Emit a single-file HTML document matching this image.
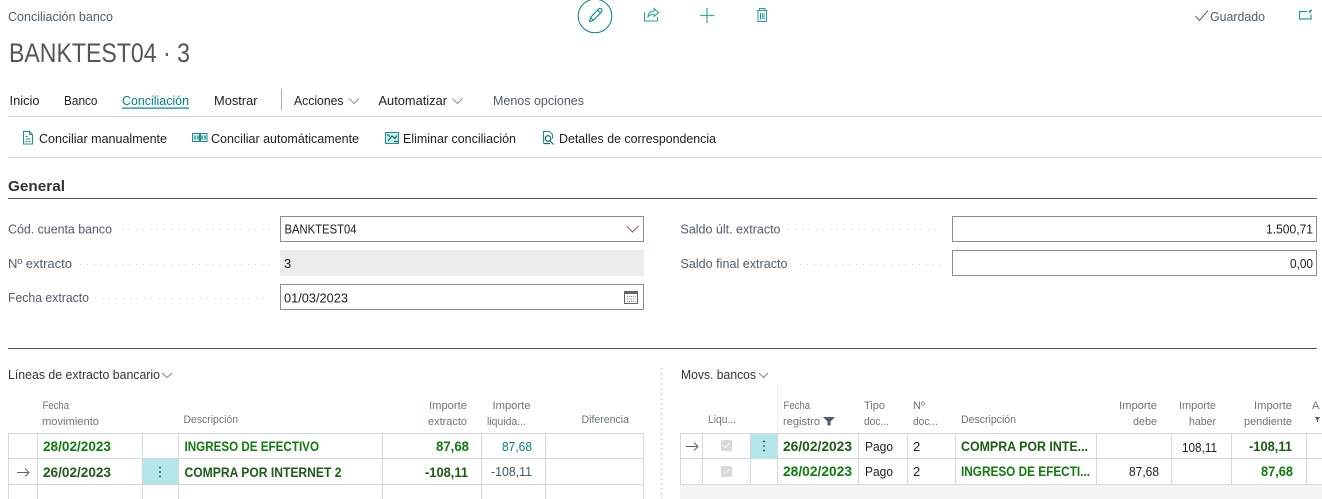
<!DOCTYPE html>
<html lang="es">
<head>
<meta charset="utf-8">
<title>Conciliación banco</title>
<style>
html,body{margin:0;padding:0;background:#fff;width:1322px;height:499px;overflow:hidden}
svg{display:block}
text{font-family:"Liberation Sans",sans-serif;font-size:13px;fill:#212121;white-space:pre}
.g{fill:#505c6d}
.h{font-size:11px;fill:#6b7480}
.l{font-size:13px;fill:#505c6d}
.b{font-weight:bold;font-size:13.5px;fill:#107c10}
.d{font-weight:bold;font-size:13.5px;fill:#1c5c14}
.ln{stroke:#d5d8dc;stroke-width:1;fill:none}
.tl{stroke:#00848a;stroke-width:1;fill:none}
.dots{stroke:#d0d3d6;stroke-width:1;stroke-dasharray:1 6;fill:none}
.arrow{stroke:#5c6670;stroke-width:1;fill:none}
</style>
</head>
<body>
<svg width="1322" height="499" viewBox="0 0 1322 499" xmlns="http://www.w3.org/2000/svg">
<rect width="1322" height="499" fill="#fff"/>

<!-- Header -->
<text x="8" y="21" class="g" textLength="105" lengthAdjust="spacingAndGlyphs">Conciliación banco</text>
<text x="9" y="62" style="font-size:27px;fill:#555" textLength="181" lengthAdjust="spacingAndGlyphs">BANKTEST04 · 3</text>

<!-- Top icons -->
<circle cx="595" cy="16" r="16.8" class="tl"/>
<path d="M589.500 21.500l1-4 8-8.500a1.700 1.700 0 0 1 3 3l-8.300 8.500zM590.500 17.500l3 3M597.500 10l3 3" fill="none" stroke="#00848a" stroke-width="1"/>
<path d="M644.500 12v9h13v-4M648 17c0-4 3-6 6-6V8.500l4.500 4-4.500 4V14c-2.500 0-4.500 1-6 3z" fill="none" stroke="#2a9a9e" stroke-width="1"/>
<path d="M707 8v15M700 15.500h14.500" fill="none" stroke="#3fa5a8" stroke-width="1.200"/>
<path d="M757 10.500h10.500M759.500 10.500V8.500h5.500v2M758 10.500v11h8.500v-11M760.500 13v6.500M762.250 13v6.500M764 13v6.500" fill="none" stroke="#2a9a9e" stroke-width="1"/>

<path d="M1195.500 16l4 4.500 8.500-10" fill="none" stroke="#5c6670" stroke-width="1"/>
<text x="1210" y="21" class="g" textLength="55" lengthAdjust="spacingAndGlyphs">Guardado</text>
<path d="M1307 11.500h-7.500v7.500h11.500v-4.500" fill="none" stroke="#2a9a9e" stroke-width="1.200"/>
<path d="M1309 12.500l2.500-2.500" stroke="#00848a" stroke-width="1.500" fill="none"/>

<!-- Nav -->
<text x="9.500" y="105" textLength="30" lengthAdjust="spacingAndGlyphs">Inicio</text>
<text x="64" y="105" textLength="33.500" lengthAdjust="spacingAndGlyphs">Banco</text>
<text x="122" y="105" style="fill:#00848a" textLength="67" lengthAdjust="spacingAndGlyphs">Conciliación</text>
<rect x="122" y="107.500" width="67" height="1.200" fill="#00848a"/>
<text x="214" y="105" textLength="43.500" lengthAdjust="spacingAndGlyphs">Mostrar</text>
<rect x="281" y="89" width="1" height="21" fill="#a9aeb4"/>
<text x="294" y="105" textLength="49.500" lengthAdjust="spacingAndGlyphs">Acciones</text>
<path d="M349 98.500l5 5 5-5" fill="none" stroke="#8a929b" stroke-width="1"/>
<text x="378.500" y="105" textLength="68.500" lengthAdjust="spacingAndGlyphs">Automatizar</text>
<path d="M452.500 98.500l5 5 5-5" fill="none" stroke="#8a929b" stroke-width="1"/>
<text x="493" y="105" class="g" textLength="91" lengthAdjust="spacingAndGlyphs">Menos opciones</text>
<path d="M8 116.500H1322" stroke="#d5d8dc" fill="none"/>

<!-- Action bar -->
<path d="M23.500 131.500h6l3 3v9.500h-9zM29.500 131.500v3h3" fill="none" stroke="#1d8f94" stroke-width="1"/>
<path d="M25.500 136.500h2M25.500 139h5M25.500 141.500h2M28.500 141.500h2" stroke="#1d8f94" stroke-width="1" fill="none"/>
<text x="39" y="143" textLength="128" lengthAdjust="spacingAndGlyphs">Conciliar manualmente</text>

<path d="M192.500 133.500h8v8h-8zM199.500 133.500h7.500v8h-7.500z" fill="#d5eeee" stroke="#1d8f94" stroke-width="1"/>
<path d="M195 135.500v4M198 135.500v4M202 135.500v4M205 135.500v4" stroke="#0c5f63" stroke-width="1" fill="none"/>
<text x="211" y="143" textLength="148" lengthAdjust="spacingAndGlyphs">Conciliar automáticamente</text>

<path d="M385.500 132.500h13v11h-13z" fill="#cfeaea" stroke="#1d8f94" stroke-width="1"/>
<path d="M388 141l4-5 3 2.500 2-3M387 134.500l3 2M394 141.500h4" stroke="#0e6f73" stroke-width="1.200" fill="none"/>
<text x="403" y="143" textLength="113" lengthAdjust="spacingAndGlyphs">Eliminar conciliación</text>

<path d="M543.500 143.500v-12h6l3 3v4" fill="none" stroke="#1d8f94" stroke-width="1"/>
<circle cx="548" cy="138.500" r="2.800" fill="none" stroke="#0e6f73" stroke-width="1.200"/>
<path d="M550 141l3.500 3.500M544 143.500h6" stroke="#0e6f73" stroke-width="1.200" fill="none"/>
<text x="559" y="143" textLength="157" lengthAdjust="spacingAndGlyphs">Detalles de correspondencia</text>
<path d="M8 157.500H1322" stroke="#d5d8dc" fill="none"/>

<!-- General -->
<text x="8" y="191" style="font-weight:bold;font-size:15px;fill:#333" textLength="57" lengthAdjust="spacingAndGlyphs">General</text>
<path d="M8 198.500H1317" stroke="#505c6d" fill="none"/>

<text x="8" y="233.500" class="l" textLength="104" lengthAdjust="spacingAndGlyphs">Cód. cuenta banco</text>
<path d="M122 229.500H270" class="dots"/>
<rect x="280.500" y="216.500" width="363" height="25" fill="#fff" stroke="#868e96"/>
<text x="284.500" y="233.500" textLength="72" lengthAdjust="spacingAndGlyphs">BANKTEST04</text>
<path d="M626.500 226l6 6 6-6" fill="none" stroke="#8a6a50" stroke-width="1"/>

<text x="8" y="268" class="l" textLength="64" lengthAdjust="spacingAndGlyphs">Nº extracto</text>
<path d="M80 264.500H270" class="dots"/>
<rect x="280" y="250" width="364" height="26" fill="#ebedef"/>
<text x="284" y="268">3</text>

<text x="8" y="302" class="l" textLength="81" lengthAdjust="spacingAndGlyphs">Fecha extracto</text>
<path d="M95 298.500H270" class="dots"/>
<rect x="280.500" y="284.500" width="363" height="25" fill="#fff" stroke="#868e96"/>
<text x="284" y="302.500" textLength="64" lengthAdjust="spacingAndGlyphs">01/03/2023</text>
<path d="M624.500 291.500h13v12h-13z" fill="none" stroke="#5c6670"/>
<rect x="624" y="291" width="14" height="3" fill="#5c6670"/>
<path d="M627 296.500h8.500M627 299h8.500M627 301.500h8.500" stroke="#7b848d" stroke-dasharray="1 1" fill="none"/>

<text x="680.500" y="233.500" class="l" textLength="100" lengthAdjust="spacingAndGlyphs">Saldo últ. extracto</text>
<path d="M788 229.500H941" class="dots"/>
<rect x="952.500" y="216.500" width="364" height="25" fill="#fff" stroke="#868e96"/>
<text x="1266" y="233.500" textLength="47" lengthAdjust="spacingAndGlyphs">1.500,71</text>

<text x="680.500" y="268" class="l" textLength="107" lengthAdjust="spacingAndGlyphs">Saldo final extracto</text>
<path d="M800 264.500H941" class="dots"/>
<rect x="952.500" y="250.500" width="364" height="25" fill="#fff" stroke="#868e96"/>
<text x="1290" y="268" textLength="23" lengthAdjust="spacingAndGlyphs">0,00</text>

<path d="M8 348.500H1317" stroke="#505c6d" fill="none"/>

<!-- Sub-panel titles -->
<text x="8" y="379" style="fill:#333" textLength="152" lengthAdjust="spacingAndGlyphs">Líneas de extracto bancario</text>
<path d="M162 373l5 4.500 5-4.500" fill="none" stroke="#7b848d"/>
<text x="681" y="379" style="fill:#333" textLength="75" lengthAdjust="spacingAndGlyphs">Movs. bancos</text>
<path d="M759 373l4.500 4.500 4.500-4.500" fill="none" stroke="#7b848d"/>
<path d="M661.500 368V499" stroke="#dfe1e4" stroke-width="2" stroke-dasharray="2 3" fill="none"/>

<!-- Left table -->
<rect x="143" y="459" width="35" height="25" fill="#b2e6ea"/>
<path class="ln" d="M8 433.500H644M8 458.500H644M8 484.500H644M8.500 433V499M37.500 433V499M142.500 433V499M178.500 433V499M382.500 433V499M481.500 433V499M545.500 433V499M643.500 433V499"/>

<text x="42.500" y="409" class="h" textLength="26.500" lengthAdjust="spacingAndGlyphs">Fecha</text>
<text x="42" y="425" class="h" textLength="57" lengthAdjust="spacingAndGlyphs">movimiento</text>
<text x="183.500" y="423" class="h" textLength="54.500" lengthAdjust="spacingAndGlyphs">Descripción</text>
<text x="429" y="409" class="h" textLength="38" lengthAdjust="spacingAndGlyphs">Importe</text>
<text x="428" y="425" class="h" textLength="39" lengthAdjust="spacingAndGlyphs">extracto</text>
<text x="492.500" y="409" class="h" textLength="38" lengthAdjust="spacingAndGlyphs">Importe</text>
<text x="487" y="425" class="h" textLength="39" lengthAdjust="spacingAndGlyphs">liquida...</text>
<text x="581.500" y="423" class="h" textLength="47.500" lengthAdjust="spacingAndGlyphs">Diferencia</text>

<text x="43" y="451" class="b" textLength="68" lengthAdjust="spacingAndGlyphs">28/02/2023</text>
<text x="184.500" y="451" class="b" textLength="134.500" lengthAdjust="spacingAndGlyphs">INGRESO DE EFECTIVO</text>
<text x="436" y="451" class="b" textLength="33" lengthAdjust="spacingAndGlyphs">87,68</text>
<text x="502" y="451" style="fill:#00848a" textLength="30" lengthAdjust="spacingAndGlyphs">87,68</text>

<path class="arrow" d="M17 472.500H29M25 468.500l4 4-4 4"/>
<circle cx="160" cy="467.500" r=".9" fill="#333"/><circle cx="160" cy="472" r=".9" fill="#333"/><circle cx="160" cy="476.500" r=".9" fill="#333"/>
<text x="43" y="477" class="d" textLength="68" lengthAdjust="spacingAndGlyphs">26/02/2023</text>
<text x="184.500" y="477" class="d" textLength="157" lengthAdjust="spacingAndGlyphs">COMPRA POR INTERNET 2</text>
<text x="425" y="477" class="d" textLength="43" lengthAdjust="spacingAndGlyphs">-108,11</text>
<text x="491" y="476" style="fill:#3d5a6c" textLength="41" lengthAdjust="spacingAndGlyphs">-108,11</text>

<!-- Right table -->
<rect x="680" y="485" width="642" height="14" fill="#f3f4f6"/>
<rect x="751" y="434" width="26" height="24" fill="#b2e6ea"/>
<path class="ln" d="M680 433.500H1322M680 458.500H1322M680 484.500H1322M680.500 433V484M702.500 433V484M750.500 433V484M858.500 433V484M907.500 433V484M955.500 433V484M1096.500 433V484M1171.500 433V484M1231.500 433V484M1306.500 433V484"/>
<path d="M777.500 383V433" stroke="#eceef0" fill="none"/>
<path class="ln" d="M777.500 433V484"/>

<text x="708" y="423" class="h" textLength="28" lengthAdjust="spacingAndGlyphs">Liqu...</text>
<text x="783.500" y="409" class="h" textLength="26.500" lengthAdjust="spacingAndGlyphs">Fecha</text>
<text x="783" y="425" class="h" textLength="37" lengthAdjust="spacingAndGlyphs">registro</text>
<path d="M823 417h12l-4.500 4.500V425.500h-3V421.500z" fill="#505c6d"/>
<text x="864" y="409" class="h" textLength="21" lengthAdjust="spacingAndGlyphs">Tipo</text>
<text x="864" y="425" class="h" textLength="25" lengthAdjust="spacingAndGlyphs">doc...</text>
<text x="913" y="409" class="h" textLength="12" lengthAdjust="spacingAndGlyphs">Nº</text>
<text x="913" y="425" class="h" textLength="25" lengthAdjust="spacingAndGlyphs">doc...</text>
<text x="961" y="423" class="h" textLength="55" lengthAdjust="spacingAndGlyphs">Descripción</text>
<text x="1119" y="409" class="h" textLength="38" lengthAdjust="spacingAndGlyphs">Importe</text>
<text x="1133" y="425" class="h" textLength="24" lengthAdjust="spacingAndGlyphs">debe</text>
<text x="1179" y="409" class="h" textLength="37" lengthAdjust="spacingAndGlyphs">Importe</text>
<text x="1189" y="425" class="h" textLength="27" lengthAdjust="spacingAndGlyphs">haber</text>
<text x="1254" y="409" class="h" textLength="38" lengthAdjust="spacingAndGlyphs">Importe</text>
<text x="1244" y="425" class="h" textLength="48" lengthAdjust="spacingAndGlyphs">pendiente</text>
<text x="1312" y="409" class="h">A</text>
<path d="M1315 417h5l-2 3v2h-1v-2z" fill="#505c6d"/>

<path class="arrow" d="M686 446.500H698M694 442.500l4 4-4 4"/>
<rect x="721" y="440" width="11" height="11" rx="1" fill="#d8dadd"/>
<path d="M723.500 445.500l2 2 4-4.500" fill="none" stroke="#f4f5f6" stroke-width="1"/>
<circle cx="764" cy="441.500" r=".9" fill="#333"/><circle cx="764" cy="446" r=".9" fill="#333"/><circle cx="764" cy="450.500" r=".9" fill="#333"/>
<text x="783" y="451" class="d" textLength="69" lengthAdjust="spacingAndGlyphs">26/02/2023</text>
<text x="865" y="451" textLength="28" lengthAdjust="spacingAndGlyphs">Pago</text>
<text x="913" y="451">2</text>
<text x="961" y="451" class="d" textLength="127" lengthAdjust="spacingAndGlyphs">COMPRA POR INTE...</text>
<text x="1182" y="452" textLength="35" lengthAdjust="spacingAndGlyphs">108,11</text>
<text x="1249" y="451" class="d" textLength="43" lengthAdjust="spacingAndGlyphs">-108,11</text>

<rect x="721" y="466" width="11" height="11" rx="1" fill="#d8dadd"/>
<path d="M723.500 471.500l2 2 4-4.500" fill="none" stroke="#f4f5f6" stroke-width="1"/>
<text x="783" y="476" class="b" textLength="69" lengthAdjust="spacingAndGlyphs">28/02/2023</text>
<text x="865" y="476" textLength="28" lengthAdjust="spacingAndGlyphs">Pago</text>
<text x="913" y="476">2</text>
<text x="961" y="476" class="b" textLength="129" lengthAdjust="spacingAndGlyphs">INGRESO DE EFECTI...</text>
<text x="1129" y="476" textLength="30" lengthAdjust="spacingAndGlyphs">87,68</text>
<text x="1261" y="476" class="b" textLength="32" lengthAdjust="spacingAndGlyphs">87,68</text>
</svg>
</body>
</html>
